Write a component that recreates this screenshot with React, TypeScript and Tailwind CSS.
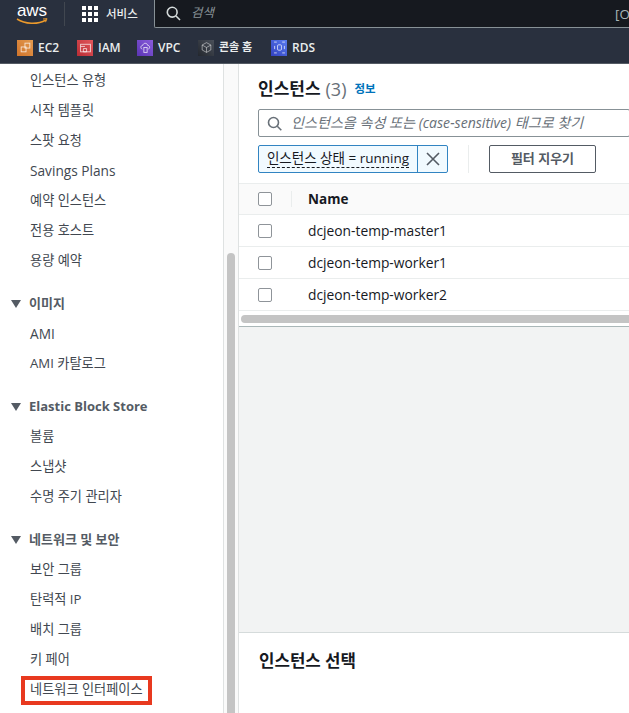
import React from "react";

const font = { fontFamily: '"Open Sans","Noto Sans CJK KR",sans-serif' };

function Item({ label, boxed }: { label: string; boxed?: boolean }) {
  const size = /[가-힣]/.test(label) ? "text-[13.2px]" : "text-[13.7px]";
  return (
    <div className={`h-[30px] flex items-center pl-[30px] text-[#414750] whitespace-nowrap ${size}`}>
      {boxed ? (
        <span className="border-[4px] border-[#e8391f] -ml-[9px] px-[5px] h-[29px] flex items-center">{label}</span>
      ) : (
        label
      )}
    </div>
  );
}

function Section({ label, items, boxedLast }: { label: string; items: string[]; boxedLast?: boolean }) {
  return (
    <div className="mt-[12px]">
      <div className="h-[31px] flex items-center pl-[11px] gap-[8px] text-[13px] font-bold text-[#545b64] whitespace-nowrap">
        <svg width="10" height="8" viewBox="0 0 10 8"><path d="M0 0h10L5 8z" fill="#545b64" /></svg>
        {label}
      </div>
      {items.map((t, i) => (
        <Item key={t} label={t} boxed={boxedLast && i === items.length - 1} />
      ))}
    </div>
  );
}

function Chk() {
  return <span className="block w-[14px] h-[14px] border border-[#8f9499] rounded-[2px] bg-white" />;
}

function Svc({ bg, label, width, small, children }: { bg: string; label: string; width: string; small?: boolean; children: React.ReactNode }) {
  return (
    <div className={`flex items-center gap-[5px] ${width}`}>
      <span className={`w-4 h-4 shrink-0 flex items-center justify-center bg-linear-to-tr ${bg}`}>
        <svg width="13" height="13" viewBox="0 0 12 12" fill="none" stroke="#ffffff" strokeWidth="0.8" strokeOpacity="0.8">{children}</svg>
      </span>
      <span className={`font-semibold text-[#eaeded] whitespace-nowrap ${small ? "text-[11px]" : "text-[12px]"}`}>{label}</span>
    </div>
  );
}

function Row({ name }: { name: string }) {
  return (
    <div className="h-[32px] flex items-center pl-[19px] border-b border-[#eaeded] bg-white">
      <Chk />
      <span className="ml-[36px] pt-[1px] text-[13.8px] text-[#16191f]">{name}</span>
    </div>
  );
}

export default function App() {
  return (
    <div style={font} className="w-[629px] h-[713px] overflow-hidden flex flex-col bg-white">
      <div className="h-[28px] bg-[#16191f] flex items-stretch shrink-0">
        <div className="w-[154px] bg-[#29303e] flex items-center">
          <div className="w-[64px] flex flex-col items-center">
            <span className="text-[17px] leading-[16px] text-white font-['Liberation_Sans']">aws</span>
            <svg width="32" height="7" viewBox="0 0 32 7" className="-mt-[1px] mb-[1px]"><path d="M1 1c8 5 20 6 29 1" fill="none" stroke="#ec9a2c" strokeWidth="1.5" /><path d="M27 1l4-.3-1.5 3.5" fill="none" stroke="#ec9a2c" strokeWidth="1" /></svg>
          </div>
          <div className="w-px h-[24px] bg-[#414750]" />
          <div className="ml-[17px] grid grid-cols-3 gap-[2px]">
            {[...Array(9)].map((_, i) => <span key={i} className="w-[4px] h-[4px] bg-white" />)}
          </div>
          <span className="ml-[8px] text-[11.5px] text-[#eaeded] font-medium">서비스</span>
        </div>
        <div className="flex-1 flex items-center border-l border-b border-[#879196] pl-[11px] rounded-bl-[2px] relative">
          <svg width="15" height="15" viewBox="0 0 15 15" fill="none" stroke="#d5dbdb" strokeWidth="1.6"><circle cx="6.2" cy="6.2" r="4.9" /><path d="M10 10l4 4" /></svg>
          <span className="ml-[10px] text-[12.5px] italic text-[#879196]">검색</span>
          <span className="absolute left-[460px] top-[4px] text-[13.5px] text-[#aab7b8]">[O</span>
        </div>
      </div>
      <div className="h-[36px] bg-[#29303e] border-b border-[#545b64] flex items-center pl-[17px] pt-[4px] shrink-0">
        <Svc width="w-[60px]" bg="from-[#d0742a] to-[#e2994e]" label="EC2"><rect x="2" y="5.500" width="4.500" height="4.500" /><rect x="5.500" y="2" width="4.500" height="4.500" /></Svc>
        <Svc width="w-[60px]" bg="from-[#b92c34] to-[#e2565c]" label="IAM"><rect x="1.500" y="3" width="9" height="7" /><path d="M1.500 5h4M4 7h3v3H4z" /></Svc>
        <Svc width="w-[61px]" bg="from-[#5a34b4] to-[#8a5bdc]" label="VPC"><path d="M3 7.500c-2-.5-1.500-3.500.5-3.500C4 1.500 7.500 1.500 8 4c2 0 2.500 3 .5 3.500" /><rect x="4.500" y="6" width="3" height="4.500" /></Svc>
        <Svc width="w-[73px]" small bg="from-[#23272e] to-[#4a505a]" label="콘솔 홈"><path d="M6 1.500l4 2.200v4.600L6 10.500 2 8.300V3.700zM2 3.700L6 6l4-2.300M6 6v4.500" strokeOpacity="0.55" /></Svc>
        <Svc width="w-[50px]" bg="from-[#3340c0] to-[#5a7cf0]" label="RDS"><rect x="4.200" y="3.500" width="3.600" height="5" rx="1" /><path d="M1 1h2.500M8.500 1H11M1 11h2.500M8.500 11H11M1.500 4.500v3M10.500 4.500v3" /></Svc>
      </div>
      <div className="flex-1 flex min-h-0">
        <div className="w-[223px] shrink-0 overflow-hidden pt-[2px] bg-white">
          {["인스턴스 유형", "시작 템플릿", "스팟 요청", "Savings Plans", "예약 인스턴스", "전용 호스트", "용량 예약"].map((t) => (
            <Item key={t} label={t} />
          ))}
          <Section label="이미지" items={["AMI", "AMI 카탈로그"]} />
          <Section label="Elastic Block Store" items={["볼륨", "스냅샷", "수명 주기 관리자"]} />
          <Section label="네트워크 및 보안" items={["보안 그룹", "탄력적 IP", "배치 그룹", "키 페어", "네트워크 인터페이스"]} boxedLast />
        </div>
        <div className="w-[16px] shrink-0 border-l border-r border-[#dfe2e2] bg-[#fafafa] pt-[189px] pl-[3px]">
          <div className="w-[8px] h-[480px] rounded-t-[4px] bg-[#c4c4c4]" />
        </div>
        <div className="flex-1 flex flex-col min-w-0">
          <div className="h-[120px] bg-[#fff] px-[19px] pt-[12px] border-b border-[#eaeded] shrink-0">
            <div className="flex items-center h-[26px]">
              <span className="text-[17px] font-bold text-[#16191f]">인스턴스</span>
              <span className="ml-[5px] text-[18px] text-[#687078]">(3)</span>
              <span className="ml-[8px] text-[11.500px] font-bold text-[#0073bb]">정보</span>
            </div>
            <div className="mt-[7px] h-[28px] -mr-[20px] border border-[#879196] rounded-[2px] flex items-center pl-[8px]">
              <svg width="15" height="15" viewBox="0 0 15 15" fill="none" stroke="#687078" strokeWidth="1.6"><circle cx="6.500" cy="6.500" r="5" /><path d="M10.300 10.300l4 4" /></svg>
              <span className="ml-[9px] text-[14.100px] italic text-[#687078] whitespace-nowrap">인스턴스을 속성 또는 (case-sensitive) 태그로 찾기</span>
            </div>
            <div className="mt-[8px] flex items-center">
              <div className="h-[28px] w-[190px] flex items-stretch border border-[#3184c2] rounded-[2px] bg-[#f1faff]">
                <span className="flex-1 flex items-center justify-center">
                  <span className="text-[13.500px] leading-[17px] text-[#16191f] border-b border-dashed border-[#16191f] whitespace-nowrap">인스턴스 상태 = running</span>
                </span>
                <span className="w-[30px] border-l border-[#3184c2] flex items-center justify-center">
                  <svg width="14" height="14" viewBox="0 0 14 14" stroke="#545b64" strokeWidth="1.600"><path d="M1 1l12 12M13 1L1 13" /></svg>
                </span>
              </div>
              <div className="w-px h-[28px] bg-[#eaeded] ml-[20px]" />
              <div className="ml-[20px] w-[107px] h-[28px] border border-[#545b64] rounded-[2px] flex items-center justify-center text-[13px] font-bold text-[#545b64]">필터 지우기</div>
            </div>
          </div>
          <div className="h-[31px] flex items-center pl-[19px] border-b border-[#eaeded] bg-[#fafafa] shrink-0">
            <Chk />
            <span className="w-px h-[16px] bg-[#eaeded] ml-[19px]" />
            <span className="ml-[16px] text-[13.500px] font-bold text-[#16191f]">Name</span>
          </div>
          <Row name="dcjeon-temp-master1" />
          <Row name="dcjeon-temp-worker1" />
          <Row name="dcjeon-temp-worker2" />
          <div className="h-[16px] shrink-0 border-b border-[#aab7b8] pt-[4px] pl-[2px] bg-white">
            <div className="h-[8px] rounded-l-[4px] bg-[#c4c4c4]" />
          </div>
          <div className="flex-1 bg-[#f2f3f3] border-b border-[#d5dbdb]" />
          <div className="h-[80px] shrink-0 bg-white pl-[20px] pt-[15px] text-[16.800px] font-bold text-[#16191f]">인스턴스 선택</div>
        </div>
      </div>
    </div>
  );
}
